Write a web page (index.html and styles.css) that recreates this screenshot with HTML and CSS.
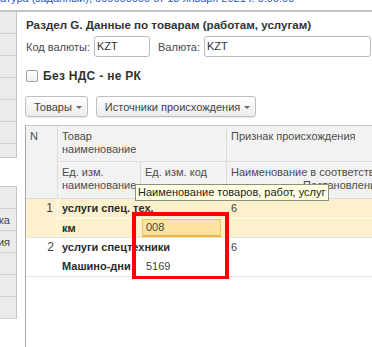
FILE: index.html
```html
<!DOCTYPE html>
<html lang="ru">
<head>
<meta charset="utf-8">
<link rel="stylesheet" href="styles.css">
</head>
<body>
<div class="topbar"><span class="toplink">атура (заданный), 000000000 от 13 января 2021 г. 0:00:00</span></div>
<div class="layout">
  <div class="side">
    <div class="side-group g1">
      <div class="scell"></div><div class="scell"></div><div class="scell"></div><div class="scell"></div><div class="scell"></div><div class="scell"></div><div class="scell"></div>
    </div>
    <div class="side-group g2">
      <div class="scell"></div>
      <div class="scell"><span>Ставка</span></div>
      <div class="scell"><span>Наименования</span></div>
      <div class="scell"></div>
      <div class="scell"></div>
      <div class="scell"></div>
    </div>
  </div>
  <div class="main">
    <div class="title">Раздел G. Данные по товарам (работам, услугам)</div>
    <div class="currency">
      <span class="lbl">Код валюты:</span>
      <div class="inp inp-code">KZT</div>
      <span class="lbl lbl2">Валюта:</span>
      <div class="inp inp-name">KZT</div>
    </div>
    <div class="check"><span class="box"></span><span class="check-lbl">Без НДС - не РК</span></div>
    <div class="toolbar">
      <div class="btn">Товары<span class="arr"></span></div>
      <div class="btn">Источники происхождения<span class="arr"></span></div>
    </div>
    <div class="grid">
      <div class="hdr">
        <div class="h h-n">N</div>
        <div class="h h-name">Товар<br>наименование</div>
        <div class="h h-sign">Признак происхождения</div>
        <div class="h h-uname">Ед. изм.<br>наименование</div>
        <div class="h h-ucode">Ед. изм. код</div>
        <div class="h h-desc"><span class="d1">Наименование в соответствии с</span><span class="d2">Постановлением</span></div>
      </div>
      <div class="drow cur">
        <div class="c c-n">1</div>
        <div class="c c-name b">услуги спец. тех.</div>
        <div class="c c-sign">6</div>
        <div class="c c-uname b l2">км</div>
        <div class="c c-ucode l2"><div class="field">008</div></div>
        <div class="c c-desc l2"></div>
      </div>
      <div class="drow">
        <div class="c c-n">2</div>
        <div class="c c-name b">услуги спецтехники</div>
        <div class="c c-sign">6</div>
        <div class="c c-uname b l2">Машино-дни</div>
        <div class="c c-ucode l2 pad">5169</div>
        <div class="c c-desc l2"></div>
      </div>
    </div>
  </div>
</div>
<div class="tooltip">Наименование товаров, работ, услуг</div>
<div class="annot"></div>
</body>
</html>
```

FILE: styles.css
```css
* { box-sizing: border-box; }
html, body { margin: 0; padding: 0; }
body {
  width: 372px;
  height: 347px;
  overflow: hidden;
  position: relative;
  background: #fff;
  font-family: "Liberation Sans", Arial, sans-serif;
  font-size: 11px;
  color: #333;
}
.topbar {
  height: 12px;
  overflow: hidden;
  border-bottom: 2px solid #c4c4c4;
}
.toplink {
  display: block;
  margin-top: -8px;
  line-height: 12px;
  font-size: 11px;
  color: #2a55c8;
  white-space: nowrap;
}
.layout {
  display: flex;
  height: 335px;
}
.side {
  width: 17px;
  flex: none;
}
.side-group {
  border-right: 1px solid #c6c6c6;
  overflow: hidden;
}
.g1 { height: 146px; border-bottom: 1px solid #c6c6c6; }
.g2 { margin-top: 28px; height: 133px; border-top: 1px solid #c6c6c6; }
.scell {
  height: 22px;
  background: #ebebeb;
  border-bottom: 1px solid #cfcfcf;
  display: flex;
  justify-content: flex-end;
  align-items: center;
  overflow: hidden;
  white-space: nowrap;
  padding-right: 6px;
  color: #444;
  font-size: 11px;
}
.main {
  flex: 1;
  margin-left: 8px;
  display: flex;
  flex-direction: column;
  min-width: 0;
}
.title {
  margin-top: 5px;
  padding-left: 1px;
  line-height: 16px;
  font-size: 11.6px;
  font-weight: bold;
  color: #333;
  white-space: nowrap;
}
.currency {
  margin-top: 3px;
  display: flex;
  align-items: center;
  padding-left: 1px;
  padding-right: 1px;
  height: 21px;
}
.lbl { color: #4a4a4a; white-space: nowrap; }
.lbl2 { margin-left: 8px; }
.inp {
  height: 21px;
  border: 1px solid #b9b9b9;
  border-radius: 3px;
  padding-left: 2px;
  line-height: 19px;
  color: #333;
  background: #fff;
}
.inp-code { width: 56px; margin-left: 4px; }
.inp-name { flex: 1; margin-left: 4px; }
.check {
  margin-top: 13px;
  display: flex;
  align-items: center;
  padding-left: 1px;
  height: 12px;
}
.box {
  width: 12px;
  height: 12px;
  border: 1px solid #a0a0a0;
  border-radius: 2px;
  background: linear-gradient(#fff, #f2f2f2);
}
.check-lbl {
  margin-left: 5px;
  font-size: 12px;
  letter-spacing: 0.3px;
  font-weight: bold;
  color: #333;
  white-space: nowrap;
}
.toolbar {
  margin-top: 14px;
  display: flex;
  gap: 8px;
}
.btn {
  height: 21px;
  padding: 0 5px 0 8px;
  border: 1px solid #bfbfbf;
  border-radius: 3px;
  background: linear-gradient(#ffffff, #ececec);
  box-shadow: 0 1px 0 rgba(0,0,0,0.06);
  display: flex;
  align-items: center;
  color: #444;
  white-space: nowrap;
}
.arr {
  width: 0;
  height: 0;
  border-left: 3px solid transparent;
  border-right: 3px solid transparent;
  border-top: 3px solid #666;
  margin-left: 4px;
  margin-top: 1px;
}
.grid {
  margin-top: 8px;
  flex: 1;
  border-top: 1px solid #cacaca;
  border-left: 1px solid #a9a9a9;
}
.hdr {
  display: grid;
  grid-template-columns: 32px 83px 86px 1fr;
  grid-template-rows: 36px 37px;
  background: #f2f2f2;
  color: #4d4d4d;
  line-height: 13px;
}
.h {
  border-right: 1px solid #dcdcdc;
  border-bottom: 1px solid #dcdcdc;
  padding: 4px 4px 0 4px;
  overflow: hidden;
  white-space: nowrap;
}
.h-sign, .h-desc { border-right: none; }
.h-n { grid-row: 1 / 3; }
.h-name { grid-column: 2 / 4; }
.d1, .d2 { display: block; }
.d2 { padding-left: 72px; }
.drow {
  display: grid;
  grid-template-columns: 32px 83px 86px 1fr;
  grid-template-rows: 19px 19px;
  border-bottom: 1px solid #e4e4e4;
  color: #333;
  line-height: 18px;
}
.cur { background: #fcf1cc; }
.c {
  overflow: hidden;
  white-space: nowrap;
  padding-left: 4px;
}
.c-n {
  grid-row: 1 / 3;
  text-align: right;
  padding-right: 4px;
  font-size: 12px;
  color: #444;
}
.c-name { grid-column: 2 / 4; }
.b { font-weight: bold; color: #2b2b2b; }
.cur .c-n { border-right: 1px solid rgba(255,255,255,0.7); }
.cur .l2 { border-top: 1px solid rgba(255,255,255,0.75); }
.cur .c-ucode { border-right: 1px solid rgba(255,255,255,0.75); }
.c-sign { color: #444; }
.c-ucode { padding-left: 1px; }
.pad { padding-left: 5px; color: #444; }
.field {
  height: 18px;
  margin-right: 5px;
  background: #fde3a0;
  border: 1px solid #f0c460;
  border-bottom: 2px solid #f0b43c;
  padding-left: 3px;
  line-height: 15px;
  color: #444;
}
.tooltip {
  position: absolute;
  left: 135px;
  top: 184px;
  width: 194px;
  height: 17px;
  background: #ffffe1;
  border: 1px solid #8f8f80;
  padding-left: 2px;
  line-height: 15px;
  color: #222;
  white-space: nowrap;
}
.annot {
  position: absolute;
  left: 132px;
  top: 212px;
  width: 97px;
  height: 67px;
  border: 4px solid #ff0000;
  border-bottom-width: 3px;
}
```
